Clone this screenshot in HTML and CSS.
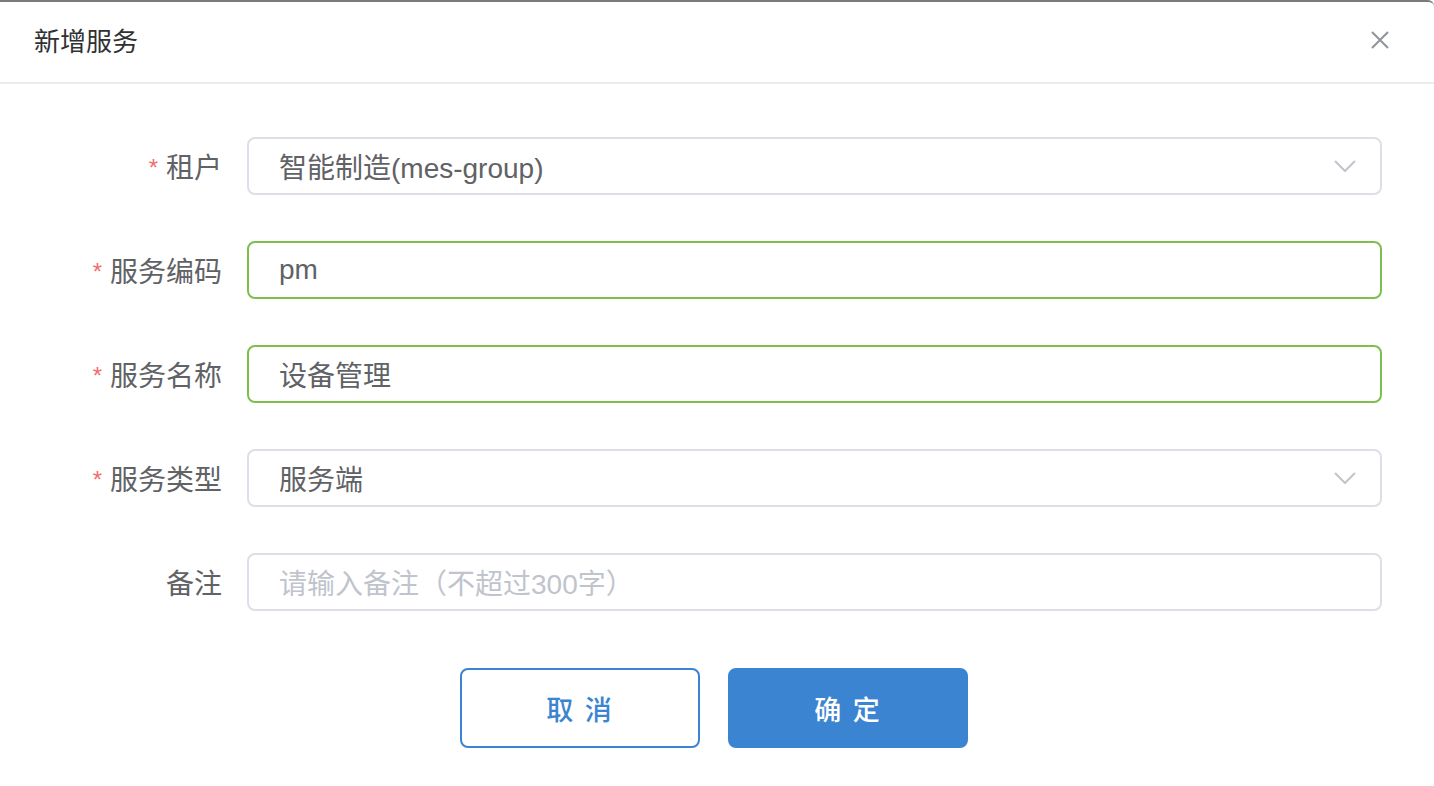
FILE: index.html
```html
<!DOCTYPE html>
<html lang="zh">
<head>
<meta charset="utf-8">
<title>新增服务</title>
<link rel="stylesheet" href="styles.css">
</head>
<body>
<div class="dialog">
  <div class="dialog-header">
    <span class="dialog-title">新增服务</span>
    <button class="dialog-close" aria-label="关闭">
      <svg width="20" height="20" viewBox="0 0 20 20"><path d="M2 2 L18 18 M18 2 L2 18" stroke="#909399" stroke-width="2" fill="none"/></svg>
    </button>
  </div>
  <div class="dialog-body">
    <div class="form-item">
      <label class="form-label required">租户</label>
      <div class="form-control select">
        <span class="value">智能制造(mes-group)</span>
        <svg class="arrow" width="22" height="12" viewBox="0 0 22 12"><path d="M1 1 L11 11 L21 1" stroke="#c0c4cc" stroke-width="2" fill="none"/></svg>
      </div>
    </div>
    <div class="form-item">
      <label class="form-label required">服务编码</label>
      <div class="form-control success"><span class="value">pm</span></div>
    </div>
    <div class="form-item">
      <label class="form-label required">服务名称</label>
      <div class="form-control success"><span class="value">设备管理</span></div>
    </div>
    <div class="form-item">
      <label class="form-label required">服务类型</label>
      <div class="form-control select">
        <span class="value">服务端</span>
        <svg class="arrow" width="22" height="12" viewBox="0 0 22 12"><path d="M1 1 L11 11 L21 1" stroke="#c0c4cc" stroke-width="2" fill="none"/></svg>
      </div>
    </div>
    <div class="form-item">
      <label class="form-label">备注</label>
      <div class="form-control"><span class="placeholder">请输入备注（不超过300字）</span></div>
    </div>
  </div>
  <div class="dialog-footer">
    <button class="btn btn-plain">取 消</button>
    <button class="btn btn-primary">确 定</button>
  </div>
</div>
</body>
</html>
```

FILE: styles.css
```css
* { box-sizing: border-box; }
html, body {
  margin: 0;
  padding: 0;
  background: #ffffff;
  font-family: "Liberation Sans", "Noto Sans CJK SC", sans-serif;
}
.dialog {
  width: 1434px;
  height: 786px;
  border-top: 2px solid #7a7a7a;
  border-top-right-radius: 6px;
  background: #fff;
}
.dialog-header {
  height: 82px;
  border-bottom: 2px solid #e9eded;
  display: flex;
  align-items: center;
  justify-content: space-between;
  padding: 0 44px 0 34px;
}
.dialog-title {
  font-size: 26px;
  color: #303133;
  line-height: 1;
}
.dialog-close {
  border: 0;
  background: none;
  padding: 0;
  width: 20px;
  height: 20px;
  display: flex;
  margin-top: -4px;
}
.dialog-body {
  padding: 53px 52px 0 0;
  display: flex;
  flex-direction: column;
  gap: 46px;
}
.form-item {
  display: flex;
  align-items: center;
  height: 58px;
}
.form-label {
  width: 247px;
  padding-right: 25px;
  text-align: right;
  font-size: 28px;
  color: #606266;
}
.form-label.required::before {
  content: "*";
  color: #f56c6c;
  margin-right: 8px;
  font-size: 24px;
  position: relative;
  top: -2px;
}
.form-control {
  flex: 1;
  height: 58px;
  border: 2px solid #dcdfe6;
  border-radius: 8px;
  display: flex;
  align-items: center;
  padding: 0 24px 0 30px;
  font-size: 28px;
}
.form-control.success { border-color: #7cc04b; }
.form-control .value { color: #606266; flex: 1; }
.form-control .placeholder { color: #c0c4cc; flex: 1; }
.form-control .arrow { flex: none; }
.dialog-footer {
  display: flex;
  justify-content: center;
  gap: 28px;
  padding: 57px 6px 0 0;
}
.btn {
  width: 240px;
  height: 80px;
  border-radius: 8px;
  font-size: 27px;
  font-family: "Liberation Sans", "Noto Sans CJK SC", sans-serif;
  font-weight: 500;
  letter-spacing: 2px;
  cursor: pointer;
}
.btn-plain {
  background: #fff;
  border: 2px solid #3a84d2;
  color: #3a84d2;
}
.btn-primary {
  background: #3a84d2;
  border: 2px solid #3a84d2;
  color: #fff;
}
```
